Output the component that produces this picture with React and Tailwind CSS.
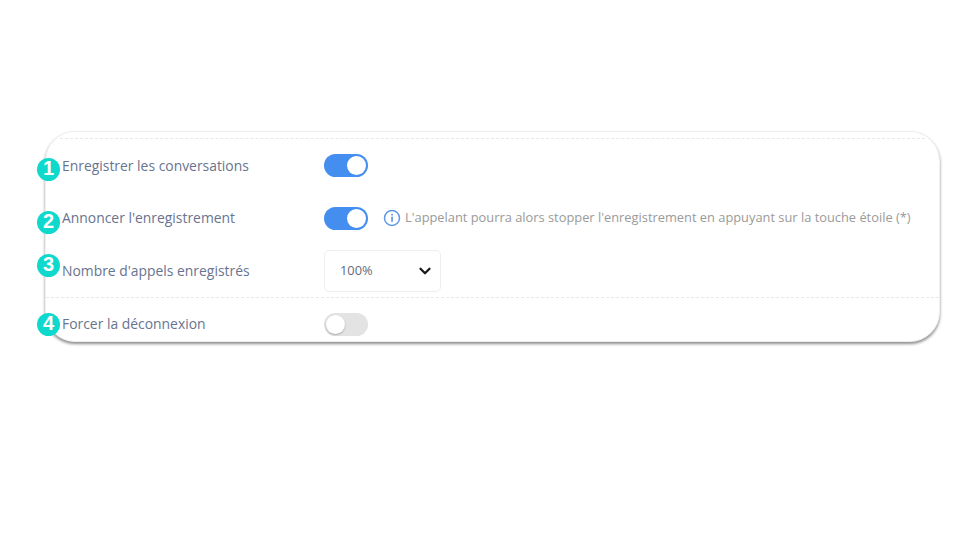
import React from 'react'
import { ChevronDown } from 'lucide-react'

function Badge({ n }) {
  return (
    <span className="absolute left-[-9px] top-[4px] flex h-[23px] w-[23px] items-center justify-center rounded-full bg-[#0fd8cc] pb-[3px] font-['Liberation_Sans',sans-serif] text-[20px] font-bold leading-none text-white">
      {n}
    </span>
  )
}

function Toggle({ on }) {
  if (on) {
    return (
      <div className="flex h-[23px] w-[44px] items-center justify-end rounded-full bg-[#448ef0] pr-[2px]">
        <div className="h-[19px] w-[19px] rounded-full bg-white" />
      </div>
    )
  }
  return (
    <div className="flex h-[23px] w-[44px] items-center rounded-full bg-[#e3e3e3] pl-[2px]">
      <div className="h-[19px] w-[19px] rounded-full bg-white shadow-[0_1px_2px_rgba(0,0,0,0.25)]" />
    </div>
  )
}

function Row({ n, label, height, badgeClass, children }) {
  return (
    <div className="relative flex items-center" style={{ height }}>
      <span className={badgeClass}><Badge n={n} /></span>
      <span className="w-[278px] pl-[16px] pt-[1px] text-[13.9px] text-[#68748f]">{label}</span>
      {children}
    </div>
  )
}

export default function App() {
  return (
    <div className="h-[540px] w-[960px] bg-white pl-[45px] pt-[131px] font-['Open_Sans',sans-serif]">
      <div className="h-[211px] w-[895px] rounded-[30px] border border-[#f0f0f0] bg-white shadow-[0_2px_3px_rgba(0,0,0,0.45)]">
        <div className="mx-[14px] mt-[6px] border-t border-dashed border-[#e8e8e8]" />
        <Row n="1" label="Enregistrer les conversations" height={53} badgeClass="absolute left-0 top-[15px]">
          <Toggle on />
        </Row>
        <Row n="2" label="Annoncer l'enregistrement" height={52} badgeClass="absolute left-0 top-[15px]">
          <Toggle on />
          <svg className="ml-[15px]" width="18" height="18" viewBox="0 0 18 18" fill="none">
            <circle cx="9" cy="9" r="7.5" stroke="#5f97e8" strokeWidth="1.5" />
            <rect x="8.2" y="7.6" width="1.7" height="5.2" fill="#5f97e8" />
            <rect x="8.2" y="4.8" width="1.7" height="1.7" fill="#5f97e8" />
          </svg>
          <span className="ml-[4px] whitespace-nowrap text-[12.85px] text-[#9a9a9a]">
            L'appelant pourra alors stopper l'enregistrement en appuyant sur la touche étoile (*)
          </span>
        </Row>
        <Row n="3" label="Nombre d'appels enregistrés" height={53} badgeClass="absolute left-0 top-[6px]">
          <div className="flex h-[42px] w-[117px] items-center justify-between rounded-[5px] border border-[#eeeeee] bg-white pl-[15px] pr-[6px] text-[12.8px] text-[#5f6b7f]">
            <span>100%</span>
            <ChevronDown size={18} strokeWidth={3} className="text-[#1a1a1a]" />
          </div>
        </Row>
        <div className="border-t border-dashed border-[#e8e8e8]" />
        <Row n="4" label="Forcer la déconnexion" height={52} badgeClass="absolute left-0 top-[11px]">
          <Toggle />
        </Row>
      </div>
    </div>
  )
}
